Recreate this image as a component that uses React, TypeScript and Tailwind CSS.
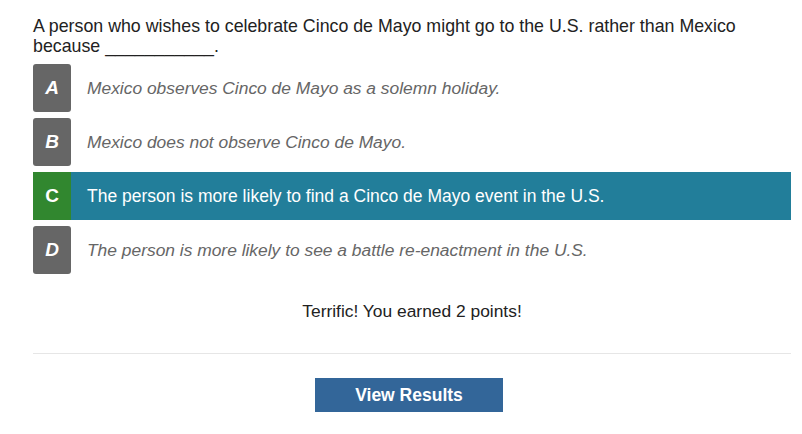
const options = [
    { letter: 'A', text: 'Mexico observes Cinco de Mayo as a solemn holiday.' },
    { letter: 'B', text: 'Mexico does not observe Cinco de Mayo.' },
    {
        letter: 'C',
        text: 'The person is more likely to find a Cinco de Mayo event in the U.S.',
        correct: true,
    },
    {
        letter: 'D',
        text: 'The person is more likely to see a battle re-enactment in the U.S.',
    },
]

export default function App() {
    return (
        <div className="min-h-[434px] bg-white pt-[16px] pr-[11px] pl-[33px] font-['Liberation_Sans',Arial,sans-serif]">
            <p className="text-[17.8px] leading-[20px] text-[#222]">
                A person who wishes to celebrate Cinco de Mayo might go to the
                U.S. rather than Mexico because ___________.
            </p>

            <div className="mt-[8px] flex flex-col gap-[6px]">
                {options.map((o) =>
                    o.correct ? (
                        <div
                            key={o.letter}
                            className="flex h-[48px] items-center bg-[#227e9a]"
                        >
                            <div className="flex h-full w-[38px] items-center justify-center bg-[#31872f] text-[19px] font-bold text-white">
                                {o.letter}
                            </div>
                            <span className="pl-[16px] text-[17.5px] text-white">
                                {o.text}
                            </span>
                        </div>
                    ) : (
                        <div
                            key={o.letter}
                            className="flex h-[48px] items-center"
                        >
                            <div className="flex h-full w-[38px] items-center justify-center rounded-[3px] bg-[#666] text-[19px] font-bold text-white italic">
                                {o.letter}
                            </div>
                            <span className="pl-[16px] text-[17.4px] text-[#666] italic">
                                {o.text}
                            </span>
                        </div>
                    ),
                )}
            </div>

            <p className="mt-[24px] text-center text-[17.4px] text-[#222]">
                Terrific! You earned 2 points!
            </p>

            <hr className="mt-[29px] border-t border-[#e6e6e6]" />

            <div className="mt-[24px] flex justify-center">
                <button className="mr-[6px] h-[34px] w-[188px] bg-[#336699] text-[17.5px] font-bold text-white">
                    View Results
                </button>
            </div>
        </div>
    )
}
